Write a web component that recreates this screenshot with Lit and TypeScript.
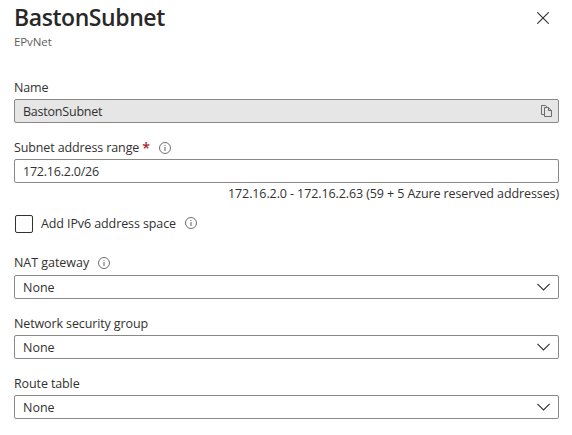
import { LitElement, html, css, svg } from "lit";
import { customElement, property } from "lit/decorators.js";

const infoIcon = html`<svg class="info" width="12" height="12" viewBox="0 0 12 12">
  ${svg`<circle cx="6" cy="6" r="5.5" fill="none" stroke="#605e5c" stroke-width="0.9"/>
  <path d="M6 5V9" stroke="#605e5c" stroke-width="1"/>
  <path d="M6 3V4" stroke="#605e5c" stroke-width="1"/>`}
</svg>`;

const chevronIcon = html`<svg width="13" height="8" viewBox="0 0 13 8">
  ${svg`<path d="M0.4 0.8L6.5 6.9L12.6 0.8" fill="none" stroke="#323130" stroke-width="1.1"/>`}
</svg>`;

const copyIcon = html`<svg width="11" height="12" viewBox="0 0 11 12">
  ${svg`<path d="M3 9.5H0.5V0.5H4.6L6 1.9M3.5 2.5H7.4L10.5 5.6V11.5H3.5ZM7.5 2.5V5.5H10.5" fill="none" stroke="#605e5c" stroke-width="0.9"/>`}
</svg>`;

const closeIcon = html`<svg width="12" height="12" viewBox="0 0 12 12">
  ${svg`<path d="M0.3 0.3L11.7 11.7M11.7 0.3L0.3 11.7" stroke="#323130" stroke-width="1.1"/>`}
</svg>`;

@customElement("subnet-field")
class SubnetField extends LitElement {
  @property() label = "";
  @property() value = "";
  @property() kind = "text";
  @property({ type: Boolean }) required = false;
  @property({ type: Boolean }) info = false;

  static styles = css`
    :host { display: block; }
    .label { display: flex; align-items: center; box-sizing: border-box; height: 24px; padding-top: 2px; line-height: 22px; white-space: pre; letter-spacing: -0.12px; }
    :host(.raised) .label { padding: 0; line-height: 24px; letter-spacing: -0.04px; }
    .star { color: #a4262c; margin-left: 3px; font-size: 14px; font-weight: 600; }
    .info { margin: 0 0 1px 9px; }
    :host(.raised) .info { margin-bottom: 0; }
    .box {
      display: flex; align-items: center; justify-content: space-between;
      box-sizing: border-box; height: 24px; padding: 0 8px;
      border: 1px solid #8a8886; border-radius: 2px; background: #fff;
    }
    .readonly { background: #e6e6e6; padding-right: 6px; letter-spacing: -0.22px; }
    .digits { letter-spacing: -0.22px; }
  `;

  render() {
    const icon = this.kind === "select" ? chevronIcon : this.kind === "readonly" ? copyIcon : "";
    return html`
      <div class="label"><span>${this.label}</span>${this.required ? html`<span class="star">*</span>` : ""}${this.info ? infoIcon : ""}</div>
      <div class="box ${this.kind}"><span class=${this.kind === "text" ? "digits" : ""}>${this.value}</span>${icon}</div>
    `;
  }
}

@customElement("app-root")
class AppRoot extends LitElement {
  static styles = css`
    :host {
      display: block; box-sizing: border-box; width: 572px; height: 435px;
      padding: 0 13px 0 14px; overflow: hidden; background: #fff; color: #323130;
      font: 12.5px "Open Sans", "Noto Sans", sans-serif;
    }
    .header { display: flex; justify-content: space-between; height: 75px; }
    h1 { margin: 1px 0 0; font-size: 23px; line-height: 32px; font-weight: 600; color: #292827; letter-spacing: -0.43px; }
    .sub { font-size: 11.5px; line-height: 17px; color: #605e5c; letter-spacing: -0.1px; }
    .close { margin: 12px 10px 0 0; height: 12px; line-height: 0; }
    .gap { margin-top: 12px; }
    .range { height: 20px; line-height: 22px; text-align: right; letter-spacing: -0.1px; }
    .check { display: flex; align-items: center; height: 20px; margin: 11px 0 17px 1px; }
    .tick { box-sizing: border-box; width: 18px; height: 18px; border: 1px solid #323130; border-radius: 2px; margin-right: 8px; }
    .caption { line-height: 20px; letter-spacing: -0.1px; }
    .info { margin: 0 0 2px 9px; }
  `;

  render() {
    return html`
      <div class="header">
        <div>
          <h1>BastonSubnet</h1>
          <div class="sub">EPvNet</div>
        </div>
        <div class="close">${closeIcon}</div>
      </div>
      <subnet-field label="Name" value="BastonSubnet" kind="readonly"></subnet-field>
      <subnet-field class="gap" label="Subnet address range" value="172.16.2.0/26" required info></subnet-field>
      <div class="range">172.16.2.0 - 172.16.2.63 (59 + 5 Azure reserved addresses)</div>
      <div class="check"><span class="tick"></span><span class="caption">Add IPv6 address space</span>${infoIcon}</div>
      <subnet-field class="raised" label="NAT gateway" value="None" kind="select" info></subnet-field>
      <subnet-field class="gap" label="Network security group" value="None" kind="select"></subnet-field>
      <subnet-field class="gap" label="Route table" value="None" kind="select"></subnet-field>
    `;
  }
}
